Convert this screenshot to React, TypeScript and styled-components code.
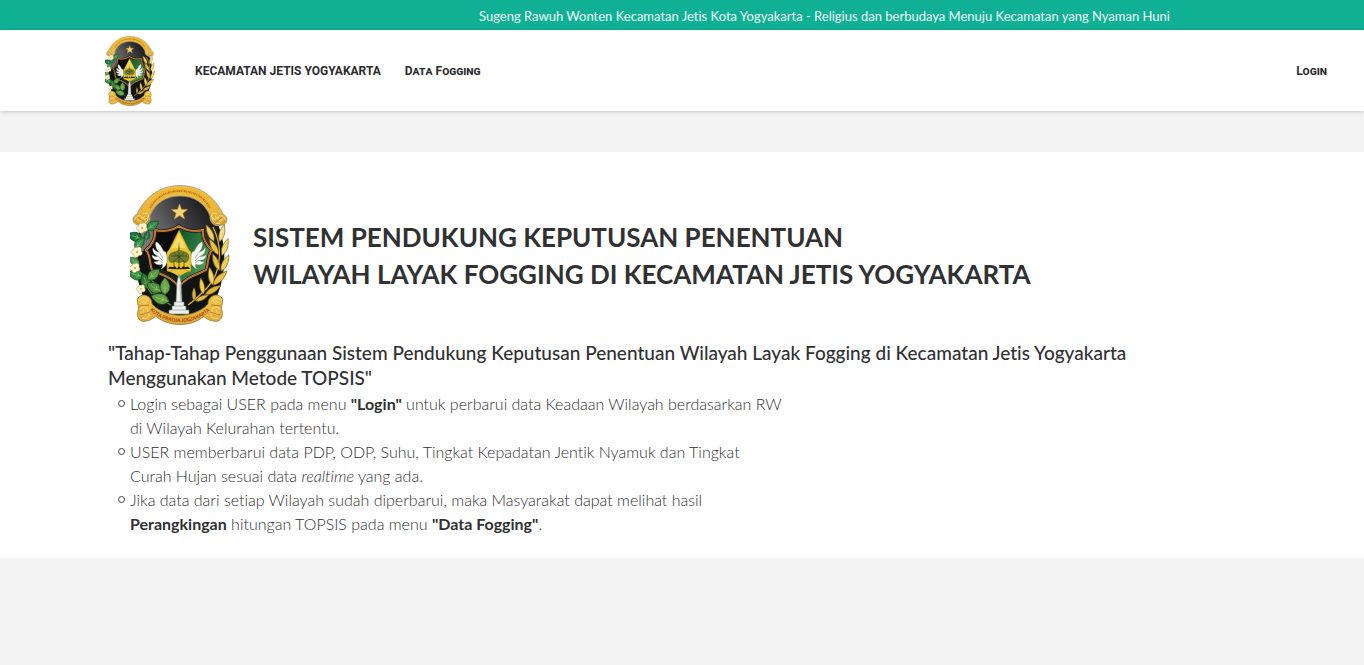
import React, { useId } from 'react';
import styled, { createGlobalStyle } from 'styled-components';

const GlobalStyle = createGlobalStyle`
  *, *::before, *::after { box-sizing: border-box; }
  body {
    margin: 0;
    background: #f4f4f4;
    color: #303133;
    font-family: Lato, "Liberation Sans", sans-serif;
    font-variant-ligatures: none;
  }
`;

const TopBar = styled.div`
  display: flex;
  justify-content: flex-end;
  padding: 2px 194px 0 24px;
  background: #0fb094;
  color: #effffb;
  font-size: 13px;
  line-height: 28px;
  white-space: nowrap;
`;

const Header = styled.header`
  position: relative;
  display: flex;
  align-items: center;
  height: 81px;
  padding: 0 37px 0 105px;
  background: #fff;
  box-shadow: 0 1px 4px rgba(40, 60, 80, 0.25);
`;

const Nav = styled.nav`
  display: flex;
  flex: 1;
  gap: 24px;
  margin-left: 40px;
`;

const NavLink = styled.a<{ $end?: boolean }>`
  margin-left: ${(p) => (p.$end ? 'auto' : '0')};
  color: #2c2c2e;
  font-family: Roboto, sans-serif;
  font-size: 12px;
  font-weight: 700;
  font-variant: small-caps;
  line-height: 20px;
  text-decoration: none;
`;

const Main = styled.main`
  margin-top: 41px;
  padding: 33px 108px 22px;
  background: #fff;
`;

const Intro = styled.div`
  display: flex;
  align-items: center;
  gap: 23px;
  padding-left: 22px;
`;

const Title = styled.h1`
  margin: 2px 0 0;
  font-size: 26px;
  font-weight: 700;
  line-height: 37px;
`;

const Subtitle = styled.h2`
  margin: 15px 0 0;
  font-size: 19px;
  font-weight: 500;
  line-height: 25px;
`;

const Steps = styled.ul`
  margin: 2px 0 0;
  padding-left: 22px;
  list-style: none;
  font-size: 16px;
  font-weight: 300;
  line-height: 24px;

  strong { font-weight: 700; }
`;

const Step = styled.li`
  position: relative;

  &::before {
    content: "";
    position: absolute;
    top: 8px;
    left: -12px;
    width: 7px;
    height: 7px;
    border: 1px solid #444;
    border-radius: 50%;
  }
`;

const Emblem = styled.svg<{ $width: number }>`
  display: block;
  flex: none;
  width: ${(p) => p.$width}px;
  height: auto;
`;

type LeafProps = { x: number; y: number; r: number; s?: number; fill: string };

const Leaf = ({ x, y, r, s = 1, fill }: LeafProps) => (
  <g transform={`translate(${x} ${y}) rotate(${r}) scale(${s})`}>
    <path d="M0 6C-6 3-5-3 0-8C5-3 6 3 0 6Z" fill={fill} stroke="#143d1c" strokeWidth=".6" />
    <path d="M0 6V-4M0 2L-2 0M0 2L2 0" fill="none" stroke="#a8cf6b" strokeWidth=".5" />
  </g>
);

const Grain = ({ x, y, r, s = 1, fill }: LeafProps) => (
  <path
    d="M0 9C-4 4-3-3 0-9C3-3 4 4 0 9Z"
    transform={`translate(${x} ${y}) rotate(${r}) scale(${s})`}
    fill={fill}
    stroke="#7d5a10"
    strokeWidth=".6"
  />
);

const Flower = ({ x, y, s = 1 }: { x: number; y: number; s?: number }) => (
  <g transform={`translate(${x} ${y}) scale(${s})`}>
    <path
      d="M0-4C2-6 5-4 4-1C6 1 4 4 2 3C0 6-3 5-3 2C-6 2-6-2-3-2C-3-4-1-5 0-4Z"
      fill="#fff5cf"
      stroke="#a39456"
      strokeWidth=".5"
    />
    <circle r="1.2" fill="#e5b74b" />
  </g>
);

const Wing = ({ flip }: { flip?: boolean }) => (
  <g transform={flip ? 'translate(98 0) scale(-1 1)' : undefined}>
    <path
      d="M26 57C28 57 31 61 33 65C34 68 35 65 36 68C39 73 38 81 31 84C33 81 33 80 32 79C29 81 25 79 24 77C27 77 29 76 29 75C25 76 22 73 22 70C25 72 27 72 28 71C24 70 22 66 23 63C25 66 27 67 29 67C26 64 25 60 26 57Z"
      fill="#f7fbf3"
      stroke="#a9bda5"
      strokeWidth=".4"
    />
    <path d="M29 67L33 73M28 71L33 76M29 75L33 78" stroke="#7e957f" strokeWidth=".6" />
  </g>
);

const CityEmblem = ({ width }: { width: number }) => {
  const id = useId();
  const gold = `${id}gold`;
  const dark = `${id}dark`;
  const green = `${id}green`;
  const shield = `${id}shield`;
  const banner = `${id}banner`;
  const shieldPath =
    'M25 45C34 47 42 46 49 41C56 46 64 47 73 45C72 54 76 60 82 65C77 70 79 78 76 85C69 89 57 91 49 102C41 91 29 89 22 85C19 78 21 70 16 65C22 60 26 54 25 45Z';
  return (
    <Emblem $width={width} viewBox="0 0 100 140" role="img" aria-label="Kota Yogyakarta">
      <defs>
        <linearGradient id={gold} x1="0" y1="0" x2="0" y2="1">
          <stop offset="0" stopColor="#f0c544" />
          <stop offset="1" stopColor="#dfa835" />
        </linearGradient>
        <linearGradient id={dark} x1="0" y1=".4" x2="1" y2="0">
          <stop offset="0" stopColor="#77777a" />
          <stop offset=".5" stopColor="#3a3a3d" />
          <stop offset="1" stopColor="#08080a" />
        </linearGradient>
        <linearGradient id={green} x1="0" y1="0" x2="1" y2="1">
          <stop offset="0" stopColor="#0b5128" />
          <stop offset=".5" stopColor="#347d43" />
          <stop offset="1" stopColor="#8fc47e" />
        </linearGradient>
        <clipPath id={shield}><path d={shieldPath} /></clipPath>
      </defs>

      <path d="M50 5C75 5 89 31 94 63C96 92 88 118 73 132H27C12 118 4 92 6 63C11 31 25 5 50 5Z" fill="#101412" />
      <path d="M50 9C70 9 82 24 88 48L84 66H12L10 52C18 24 30 9 50 9Z" fill={`url(#${dark})`} />

      <path
        d="M7 29C15 12 30 .5 50 .5C70 .5 85 12 93 29C99 32 98 39 92 40C86 43 79 38 80 31C75 18 64 11 50 11C36 11 25 18 20 31C21 38 14 43 8 40C2 39 1 32 7 29Z"
        fill={`url(#${gold})`}
        stroke="#97958b"
        strokeWidth=".8"
      />
      <path d="M16 25C24 11 36 5.500 50 5.500C64 5.500 76 11 84 25" fill="none" stroke="#f3b632" strokeWidth="6" />
      <path
        d="M20 23C27 11 37 6 50 6C63 6 73 11 80 23"
        fill="none"
        stroke="#b07122"
        strokeWidth="2"
        strokeDasharray="1 .8 .6 .7 1.400 .8"
      />
      <path
        d="M5 34C8 29 13 30 12 34C11 37 7 36 8 34M13 29C18 26 21 32 16 34C13 35 13 32 15 31M10 38C15 40 19 36 17 33M95 34C92 29 87 30 88 34C89 37 93 36 92 34M87 29C82 26 79 32 84 34C87 35 87 32 85 31M90 38C85 40 81 36 83 33"
        fill="none"
        stroke="#f7df92"
        strokeWidth="1"
      />
      <path d="M5 36C9 42 16 40 19 35M95 36C91 42 84 40 81 35M8 32L15 38M92 32L85 38" fill="none" stroke="#a37827" strokeWidth=".7" />

      <path d="M49.500 19L51.500 24.500H57.500L52.800 28.200L54.600 34L49.500 30.600L44.400 34L46.200 28.200L41.500 24.500H47.500Z" fill="#f8d476" stroke="#d08b2c" strokeWidth=".6" />

      <g clipPath={`url(#${shield})`}>
        <path d="M15 40H50V105H15Z" fill="#0a0b0a" />
        <path d="M49 40H84V105H49Z" fill={`url(#${green})`} />
        <path d="M22 84C32 80 40 91 49 92V101C41 90 29 91 22 84Z" fill="#17251a" />
      </g>
      <path d={shieldPath} fill="none" stroke="#29190c" strokeWidth="3.500" />
      <path d={shieldPath} fill="none" stroke="#d9a04a" strokeWidth="1.800" />
      <path d={shieldPath} fill="none" stroke="#913719" strokeWidth=".6" />
      <Wing />
      <Wing flip />
      <path d="M49 45L59 65L61 67V86C57 87 52 89 49 92C46 89 41 87 37 86V67L39 65Z" fill="#edc531" stroke="#9d7c1a" strokeWidth=".5" />
      <path d="M49 48L56 63H42Z" fill="#f4dc64" />
      <path d="M49 57L50 66H48Z" fill="#6a7327" />
      <path d="M39 75C38 70 41 67 45 67C48 65 51 65 54 67C58 67 60 71 58 75C57 78 54 78 53 76C51 78 47 78 45 76C43 78 40 78 39 75Z" fill="#717f31" stroke="#40511e" strokeWidth=".6" />
      <path d="M41 71H57M44 68L54 76M44 76L54 68M49 67V83M44 76V82M54 76V82" fill="none" stroke="#303d18" strokeWidth=".7" />
      <path d="M38 84C40 79 43 84 45 81C47 84 47 84 49 81C51 84 51 84 53 81C55 84 58 79 60 84Z" fill="#17200e" />
      <path d="M40 86C46 84 52 84 58 86" fill="none" stroke="#b79a27" strokeWidth=".8" />
      <path d="M49 89L51 97L52 117H54V121H56V125H59V129H39V125H42V121H44V117H46L47 97Z" fill="#edf0ed" stroke="#747c78" strokeWidth=".6" />
      <path d="M46 117H52M44 121H54M42 125H56M50 99L51 116" stroke="#a1a8a5" strokeWidth=".8" />

      <path d="M16 42C2 61 4 88 22 109M12 91C25 94 31 105 39 116M22 108C30 110 34 117 41 120" fill="none" stroke="#5c8e3f" strokeWidth="1.200" />
      <Leaf x={22} y={41} r={55} fill="#2f8a4b" />
      <Leaf x={17} y={51} r={15} s={0.7} fill="#226f39" />
      <Leaf x={6} y={52} r={-70} s={1.1} fill="#17713c" />
      <Leaf x={9} y={59} r={40} fill="#348f51" />
      <Leaf x={5} y={77} r={-50} s={0.9} fill="#4b9950" />
      <Leaf x={7} y={90} r={-75} s={1.2} fill="#328b45" />
      <Leaf x={16} y={97} r={-20} s={1.2} fill="#2e7338" />
      <Leaf x={23} y={90} r={50} s={1.1} fill="#579a45" />
      <Leaf x={25} y={103} r={-60} s={1.2} fill="#4f9140" />
      <Leaf x={35} y={102} r={0} s={1.2} fill="#67a44b" />
      <Leaf x={31} y={114} r={-72} s={1.3} fill="#609d43" />
      <Flower x={12} y={43} s={1.1} />
      <Flower x={7} y={67} s={1.1} />
      <Flower x={5} y={83} />
      <Flower x={11} y={104} s={0.9} />

      <path d="M83 42C92 60 93 86 77 103C70 110 64 116 58 120" fill="none" stroke="#e6b934" strokeWidth="1.200" />
      <Grain x={80} y={48} r={-25} fill="#f0ce62" />
      <Grain x={92} y={48} r={15} fill="#f6de80" />
      <Grain x={84} y={62} r={-30} fill="#e5c13f" />
      <Grain x={95} y={62} r={20} fill="#f3d96c" />
      <Grain x={86} y={77} r={-22} fill="#e5bf40" />
      <Grain x={95} y={78} r={25} fill="#f0cf58" />
      <Grain x={81} y={91} r={-10} fill="#f0d262" />
      <Grain x={90} y={93} r={45} s={1.1} fill="#e7be45" />
      <Grain x={72} y={101} r={-10} s={0.9} fill="#efce58" />
      <Grain x={83} y={105} r={60} fill="#d9b33c" />
      <Grain x={64} y={109} r={0} s={0.7} fill="#d7b348" />
      <Grain x={72} y={113} r={65} s={0.8} fill="#e0b946" />

      <path
        d="M8 113C13 107 22 111 22 119C36 134 64 134 78 119C78 111 87 107 92 113C94 118 90 122 92 126C94 132 89 138 84 136C77 136 74 130 73 132C61 142 39 142 27 132C25 130 22 136 16 136C10 138 6 132 8 126C10 122 6 118 8 113Z"
        fill={`url(#${gold})`}
        stroke="#8c7340"
        strokeWidth=".8"
      />
      <path d="M10 115C14 110 19 115 15 118C12 119 12 116 14 116M10 124C15 119 20 124 17 128C13 131 11 127 14 125M12 133C18 135 21 130 18 127M90 115C86 110 81 115 85 118C88 119 88 116 86 116M90 124C85 119 80 124 83 128C87 131 89 127 86 125M88 133C82 135 79 130 82 127" fill="none" stroke="#f5de95" strokeWidth="1" />
      <path d="M9 121L19 120M10 130L20 127M91 121L81 120M90 130L80 127" fill="none" stroke="#a8731e" strokeWidth=".8" />
      <path id={banner} d="M17 122C33 142 67 142 83 122" fill="none" />
      <text fontSize="5" fontFamily="Lato, sans-serif" fontWeight="700" fill="#a33b14" textAnchor="middle">
        <textPath href={`#${banner}`} startOffset="50%">KOTA PRADJA JOGJAKARTA</textPath>
      </text>
    </Emblem>
  );
};

export default function App() {
  return (
    <>
      <GlobalStyle />
      <TopBar>
        Sugeng Rawuh Wonten Kecamatan Jetis Kota Yogyakarta - Religius dan berbudaya Menuju Kecamatan yang Nyaman Huni
      </TopBar>
      <Header>
        <CityEmblem width={50} />
        <Nav>
          <NavLink href="#home">KECAMATAN JETIS YOGYAKARTA</NavLink>
          <NavLink href="#data">Data Fogging</NavLink>
          <NavLink href="#login" $end>Login</NavLink>
        </Nav>
      </Header>
      <Main>
        <Intro>
          <CityEmblem width={100} />
          <Title>
            SISTEM PENDUKUNG KEPUTUSAN PENENTUAN
            <br />
            WILAYAH LAYAK FOGGING DI KECAMATAN JETIS YOGYAKARTA
          </Title>
        </Intro>
        <Subtitle>
          "Tahap-Tahap Penggunaan Sistem Pendukung Keputusan Penentuan Wilayah Layak Fogging di Kecamatan Jetis Yogyakarta
          <br />
          Menggunakan Metode TOPSIS"
        </Subtitle>
        <Steps>
          <Step>
            Login sebagai USER pada menu <strong>"Login"</strong> untuk perbarui data Keadaan Wilayah berdasarkan RW
            <br />
            di Wilayah Kelurahan tertentu.
          </Step>
          <Step>
            USER memberbarui data PDP, ODP, Suhu, Tingkat Kepadatan Jentik Nyamuk dan Tingkat
            <br />
            Curah Hujan sesuai data <em>realtime</em> yang ada.
          </Step>
          <Step>
            Jika data dari setiap Wilayah sudah diperbarui, maka Masyarakat dapat melihat hasil
            <br />
            <strong>Perangkingan</strong> hitungan TOPSIS pada menu <strong>"Data Fogging"</strong>.
          </Step>
        </Steps>
      </Main>
    </>
  );
}
